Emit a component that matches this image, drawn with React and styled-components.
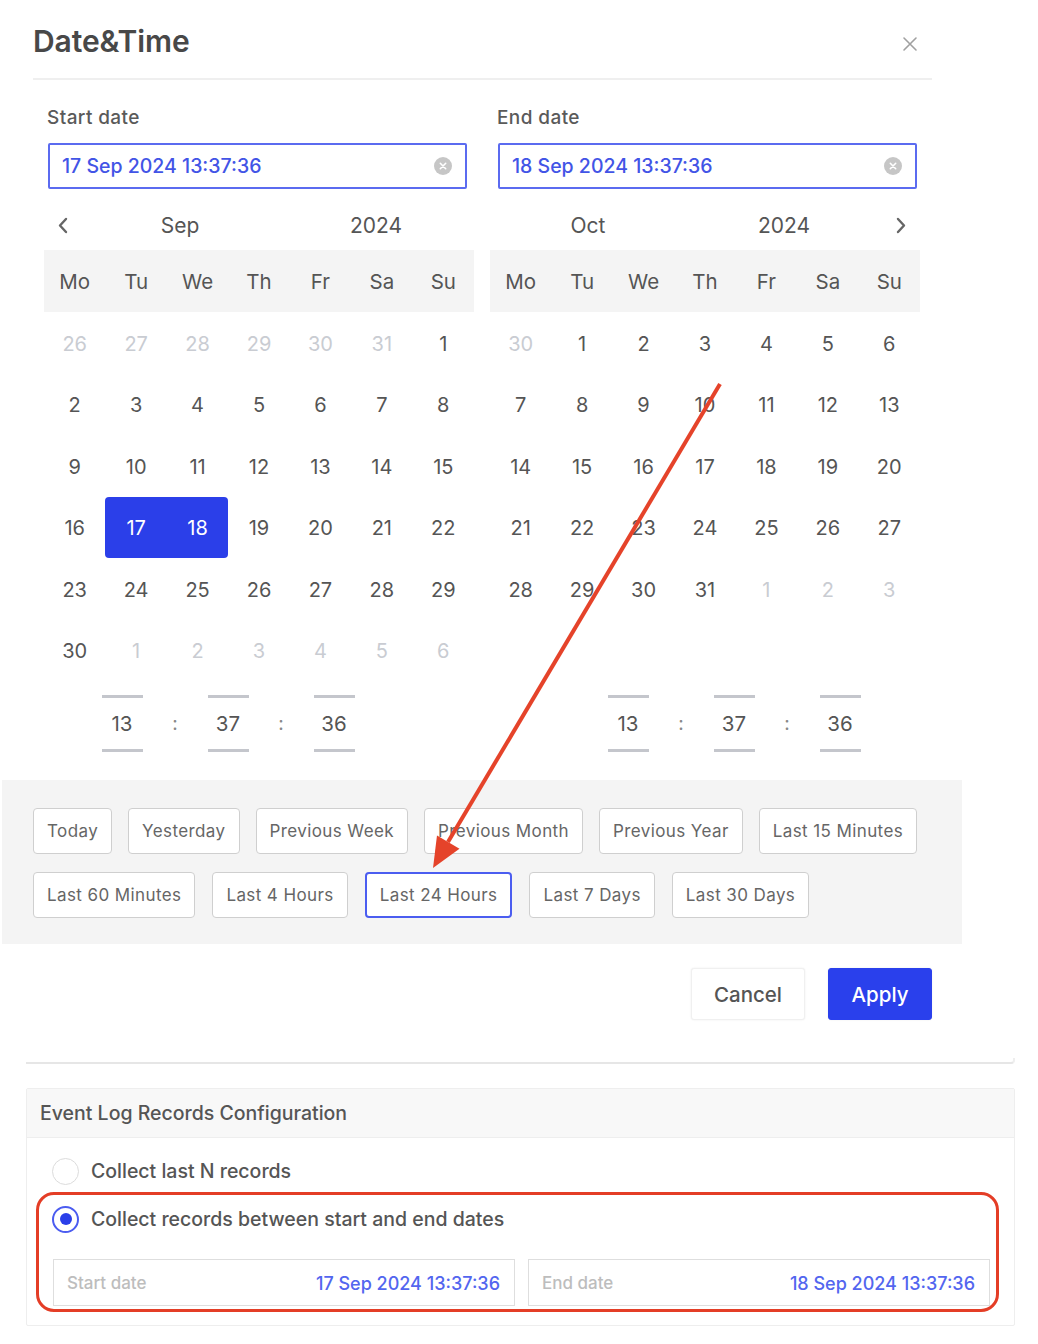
import React from 'react';
import styled, { createGlobalStyle } from 'styled-components';

const GlobalStyle = createGlobalStyle`
  body {
    margin: 0;
    background: #fff;
    font-family: Inter, "Noto Sans", "Liberation Sans", sans-serif;
  }
  * { box-sizing: border-box; }
`;

const Page = styled.div`
  position: relative;
  width: 1038px;
  height: 1344px;
  overflow: hidden;
`;

const Dialog = styled.section`
  width: 960px;
  margin-left: 2px;
`;

const Header = styled.header`
  display: flex;
  align-items: center;
  justify-content: space-between;
  height: 80px;
  padding-top: 4px;
  margin: 0 30px 0 31px;
  border-bottom: 2px solid #efefef;
`;

const Title = styled.h2`
  margin: 0;
  font-size: 30px;
  font-weight: 600;
  color: #484848;
  letter-spacing: -0.1px;
`;

const CloseBtn = styled.button`
  border: 0;
  background: none;
  padding: 0;
  margin: 6px 14px 0 0;
  display: flex;
  color: #a0a0a0;
`;

const Pickers = styled.div`
  display: grid;
  grid-template-columns: 430px 430px;
  column-gap: 16px;
  row-gap: 14px;
  padding-left: 42px;
  margin-top: 27px;
`;

const Column = styled.div`
  display: flex;
  flex-direction: column;
`;

const Label = styled.div`
  margin-left: ${p => p.$shift - 1}px;
  font-size: 19px;
  line-height: 22px;
  letter-spacing: 0.4px;
  color: #5a5a5a;
  font-weight: 500;
`;

const Input = styled.div`
  display: flex;
  align-items: center;
  justify-content: space-between;
  width: 419px;
  height: 46px;
  margin: 14px 0 0 ${p => p.$shift}px;
  padding: 0 13px 0 12px;
  border: 2px solid #5b6bf0;
  border-radius: 2px;
  font-size: 19.5px;
  font-weight: 500;
  color: #4254e6;
`;

const Nav = styled.div`
  display: flex;
  align-items: center;
  height: 40px;
  margin: 16px 0 5px;
  font-size: 21px;
  color: #555;
`;

const NavArrow = styled.span`
  width: 38px;
  display: flex;
  justify-content: center;
  color: #666;
`;

const NavLabel = styled.span`
  width: 196px;
  text-align: center;
`;

const WeekBand = styled.div`
  display: grid;
  grid-template-columns: repeat(7, 1fr);
  height: 62px;
  align-items: center;
  background: #f4f4f4;
  font-size: 20.5px;
  color: #555;
  text-align: center;
`;

const Days = styled.div`
  display: grid;
  grid-template-columns: repeat(7, 1fr);
  grid-auto-rows: 61.5px;
`;

const Day = styled.div`
  display: flex;
  align-items: center;
  justify-content: center;
  padding-top: 2px;
  font-size: 20px;
  color: ${p => (p.$sel ? '#fff' : p.$muted ? '#c9ccd2' : '#555')};
  background: ${p => (p.$sel ? '#2b3fe9' : 'transparent')};
  border-radius: ${p => (p.$start ? '4px 0 0 4px' : p.$end ? '0 4px 4px 0' : '0')};
`;

const Time = styled.div`
  display: flex;
  padding-left: ${p => p.$pad}px;
`;

const Unit = styled.div`
  display: flex;
  flex-direction: column;
  align-items: center;
  width: 42px;
  font-size: 20.5px;
  line-height: 51px;
  color: #555;
  &::before, &::after {
    content: '';
    width: 41px;
    height: 3px;
    background: #c4c6cc;
  }
`;

const Colon = styled.div`
  width: 64px;
  display: flex;
  align-items: center;
  justify-content: center;
  font-size: 19px;
  color: #888;
`;

const Presets = styled.div`
  margin-top: 28px;
  padding: 28px 30px 26px 31px;
  background: #f4f4f4;
  display: flex;
  flex-direction: column;
  gap: 18px;
`;

const PresetRow = styled.div`
  display: flex;
  gap: ${p => p.$gap}px;
`;

const Preset = styled.button`
  height: 46px;
  padding: 0 13px;
  border: ${p => (p.$active ? '2px solid #4b5df0' : '1.5px solid #cfcfcf')};
  border-radius: 4px;
  background: #fff;
  font-family: inherit;
  font-size: 17px;
  letter-spacing: 0.4px;
  color: #666;
`;

const Footer = styled.div`
  display: flex;
  justify-content: flex-end;
  gap: 23px;
  margin-top: 24px;
  padding-right: 30px;
`;

const FooterBtn = styled.button`
  width: ${p => (p.$primary ? 104 : 114)}px;
  height: 52px;
  border-radius: 3px;
  border: 1px solid ${p => (p.$primary ? '#2a40ec' : '#f0f0f0')};
  background: ${p => (p.$primary ? '#2a40ec' : '#fff')};
  box-shadow: 0 0 2px rgba(0, 0, 0, 0.08);
  color: ${p => (p.$primary ? '#fff' : '#555')};
  font-family: inherit;
  font-size: 20.5px;
  font-weight: 500;
`;

const CardEdge = styled.div`
  height: 6px;
  margin: 38px 23px 0 26px;
  border-bottom: 2px solid #e6e6e6;
  border-right: 2px solid #eeeeee;
  border-bottom-right-radius: 4px;
`;

const Config = styled.section`
  width: 989px;
  margin: 24px 0 0 26px;
  border: 1.5px solid #eeeeee;
  border-radius: 2px;
`;

const ConfigHead = styled.div`
  height: 49px;
  display: flex;
  align-items: center;
  padding-left: 13px;
  background: #f8f8f8;
  border-bottom: 1.5px solid #eeeeee;
  font-size: 19.5px;
  font-weight: 500;
  color: #555;
`;

const ConfigBody = styled.div`
  padding: 16px 24px 19px 25px;
`;

const RadioRow = styled.label`
  display: flex;
  align-items: center;
  gap: 12px;
  height: 34px;
  margin-bottom: 14px;
  font-size: 19.5px;
  font-weight: 500;
  color: #555;
`;

const RadioDot = styled.span`
  width: 27px;
  height: 27px;
  border-radius: 50%;
  border: ${p => (p.$on ? '2px solid #4b5cf0' : '1.5px solid #dcdcdc')};
  display: flex;
  align-items: center;
  justify-content: center;
  &::after {
    content: '';
    width: 12px;
    height: 12px;
    border-radius: 50%;
    background: ${p => (p.$on ? '#2b3fe9' : 'transparent')};
  }
`;

const Range = styled.div`
  display: flex;
  gap: 13px;
  margin-top: 23px;
  padding-left: 1px;
`;

const RangeField = styled.div`
  flex: 1;
  height: 47px;
  display: flex;
  align-items: center;
  justify-content: space-between;
  padding: 0 14px 0 13px;
  border: 1.5px solid #dedede;
`;

const RangeLabel = styled.span`
  font-size: 17px;
  font-weight: 500;
  color: #bdbdbd;
`;

const RangeValue = styled.span`
  padding-top: 2px;
  font-size: 18px;
  font-weight: 500;
  color: #5366ef;
`;

const Highlight = styled.div`
  position: absolute;
  left: 36px;
  top: 1192px;
  width: 963px;
  height: 120px;
  border: 3px solid #e43d26;
  border-radius: 18px;
  pointer-events: none;
`;

const ArrowLayer = styled.svg`
  position: absolute;
  left: 0;
  top: 0;
  pointer-events: none;
`;

const WEEK = ['Mo', 'Tu', 'We', 'Th', 'Fr', 'Sa', 'Su'];

function monthCells(year, month) {
  const first = new Date(year, month, 1);
  const lead = (first.getDay() + 6) % 7;
  const inMonth = new Date(year, month + 1, 0).getDate();
  const prevLen = new Date(year, month, 0).getDate();
  const cells = [];
  for (let i = lead; i > 0; i--) cells.push({ d: prevLen - i + 1, muted: true });
  for (let d = 1; d <= inMonth; d++) cells.push({ d, muted: false });
  let n = 1;
  while (cells.length % 7) cells.push({ d: n++, muted: true });
  return cells;
}

function ClearIcon() {
  return (
    <svg width="18" height="18" viewBox="0 0 18 18">
      <circle cx="9" cy="9" r="9" fill="#c6c6c6" />
      <path d="M6.3 6.3l5.4 5.4M11.7 6.3l-5.4 5.4" stroke="#fff" strokeWidth="1.6" strokeLinecap="round" />
    </svg>
  );
}

function Chevron({ dir }) {
  const d = dir === 'left' ? 'M9 2L3 8.5L9 15' : 'M3 2L9 8.5L3 15';
  return (
    <svg width="12" height="17" viewBox="0 0 12 17">
      <path d={d} fill="none" stroke="currentColor" strokeWidth="2.4" strokeLinecap="round" strokeLinejoin="round" />
    </svg>
  );
}

function Calendar({ label, value, shift, year, month, monthName, arrow, selected = [] }) {
  const cells = monthCells(year, month);
  return (
    <Column>
      <Label $shift={shift}>{label}</Label>
      <Input $shift={shift}>
        <span>{value}</span>
        <ClearIcon />
      </Input>
      <Nav>
        {arrow === 'left' && <NavArrow><Chevron dir="left" /></NavArrow>}
        <NavLabel>{monthName}</NavLabel>
        <NavLabel>{year}</NavLabel>
        {arrow === 'right' && <NavArrow><Chevron dir="right" /></NavArrow>}
      </Nav>
      <WeekBand>
        {WEEK.map(w => <span key={w}>{w}</span>)}
      </WeekBand>
      <Days>
        {cells.map((c, i) => {
          const sel = !c.muted && selected.includes(c.d);
          return (
            <Day
              key={i}
              $muted={c.muted}
              $sel={sel}
              $start={sel && c.d === selected[0]}
              $end={sel && c.d === selected[selected.length - 1]}
            >
              {c.d}
            </Day>
          );
        })}
      </Days>
    </Column>
  );
}

function TimePicker({ pad }) {
  return (
    <Time $pad={pad}>
      <Unit>13</Unit>
      <Colon>:</Colon>
      <Unit>37</Unit>
      <Colon>:</Colon>
      <Unit>36</Unit>
    </Time>
  );
}

const ROW1 = ['Today', 'Yesterday', 'Previous Week', 'Previous Month', 'Previous Year', 'Last 15 Minutes'];
const ROW2 = ['Last 60 Minutes', 'Last 4 Hours', 'Last 24 Hours', 'Last 7 Days', 'Last 30 Days'];

export default function App() {
  return (
    <Page>
      <GlobalStyle />
      <Dialog>
        <Header>
          <Title>Date&amp;Time</Title>
          <CloseBtn aria-label="close">
            <svg width="16" height="16" viewBox="0 0 16 16">
              <path d="M2 2l12 12M14 2L2 14" stroke="currentColor" strokeWidth="1.6" strokeLinecap="round" />
            </svg>
          </CloseBtn>
        </Header>

        <Pickers>
          <Calendar
            label="Start date"
            value="17 Sep 2024 13:37:36"
            shift={4}
            year={2024}
            month={8}
            monthName="Sep"
            arrow="left"
            selected={[17, 18]}
          />
          <Calendar
            label="End date"
            value="18 Sep 2024 13:37:36"
            shift={8}
            year={2024}
            month={9}
            monthName="Oct"
            arrow="right"
          />
          <TimePicker pad={57} />
          <TimePicker pad={117} />
        </Pickers>

        <Presets>
          <PresetRow $gap={16}>
            {ROW1.map(p => <Preset key={p}>{p}</Preset>)}
          </PresetRow>
          <PresetRow $gap={17}>
            {ROW2.map(p => <Preset key={p} $active={p === 'Last 24 Hours'}>{p}</Preset>)}
          </PresetRow>
        </Presets>

        <Footer>
          <FooterBtn>Cancel</FooterBtn>
          <FooterBtn $primary>Apply</FooterBtn>
        </Footer>
      </Dialog>

      <CardEdge />

      <Config>
        <ConfigHead>Event Log Records Configuration</ConfigHead>
        <ConfigBody>
          <RadioRow>
            <RadioDot />
            Collect last N records
          </RadioRow>
          <RadioRow>
            <RadioDot $on />
            Collect records between start and end dates
          </RadioRow>
          <Range>
            <RangeField>
              <RangeLabel>Start date</RangeLabel>
              <RangeValue>17 Sep 2024 13:37:36</RangeValue>
            </RangeField>
            <RangeField>
              <RangeLabel>End date</RangeLabel>
              <RangeValue>18 Sep 2024 13:37:36</RangeValue>
            </RangeField>
          </Range>
        </ConfigBody>
      </Config>

      <Highlight />
      <ArrowLayer width="1038" height="1344">
        <line x1="720" y1="384" x2="448" y2="842" stroke="#e5432a" strokeWidth="4" />
        <polygon points="433,868 437,835.6 459.5,848.8" fill="#e5432a" />
      </ArrowLayer>
    </Page>
  );
}
